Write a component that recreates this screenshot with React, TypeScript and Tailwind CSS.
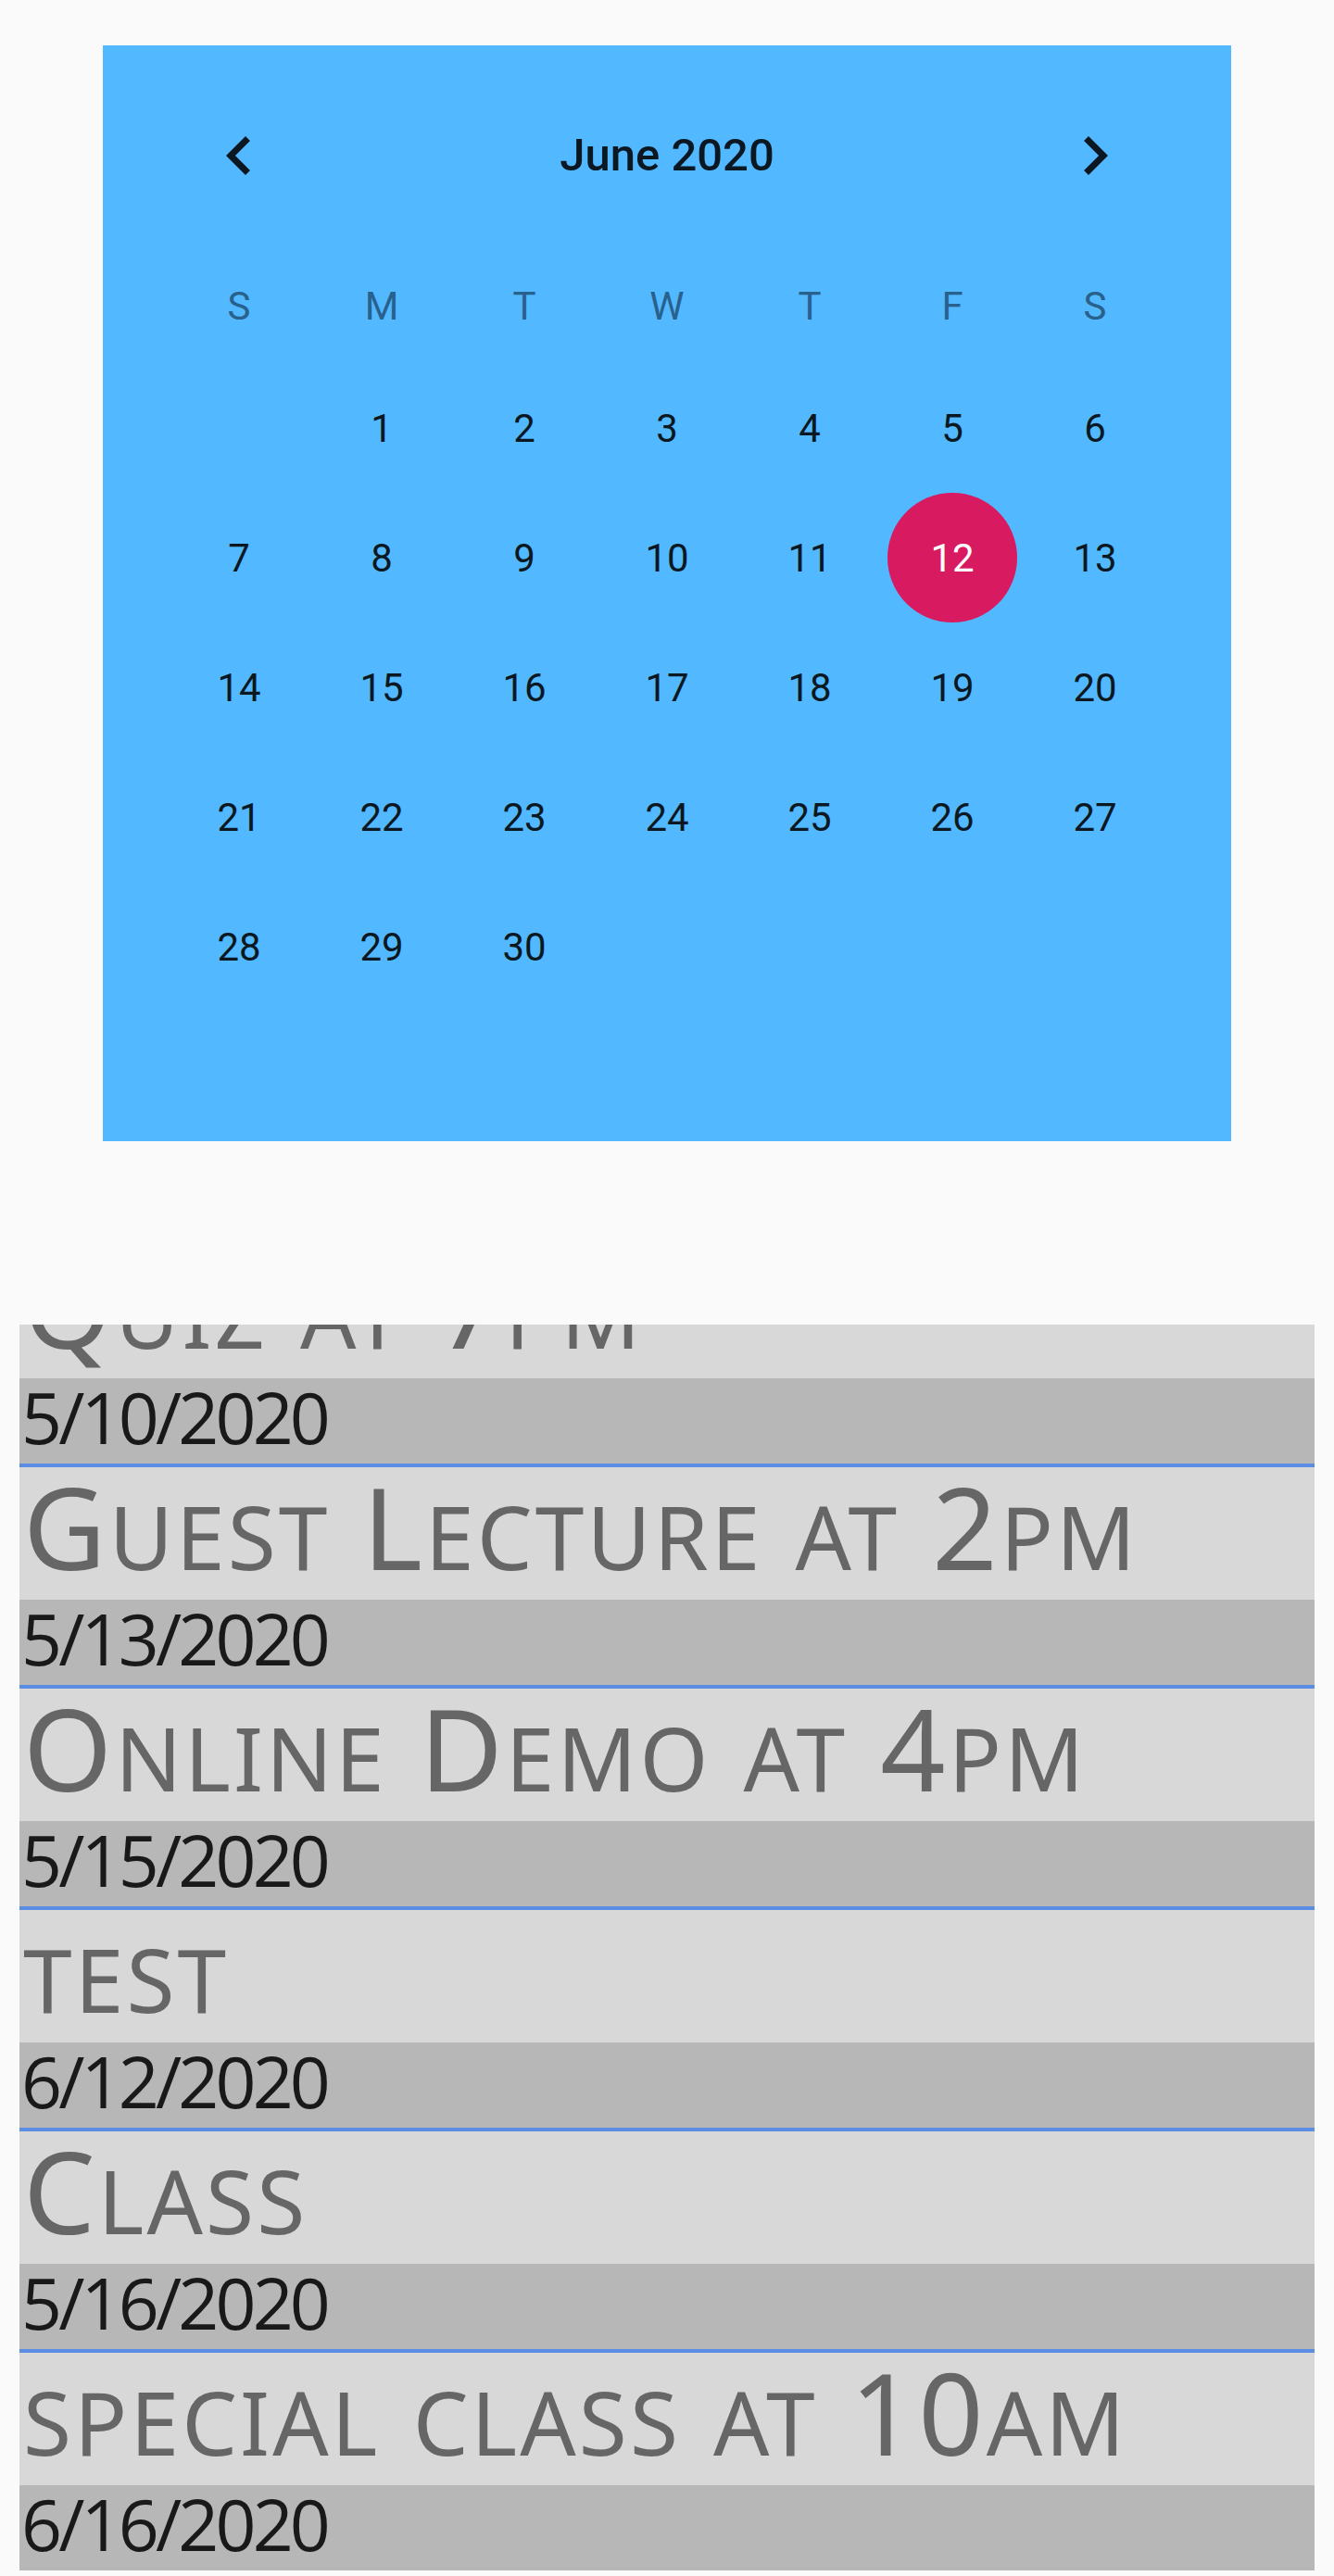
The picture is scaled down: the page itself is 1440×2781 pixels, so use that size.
import { ReactNode } from "react";

interface IEvent {
  title: string;
  date: string;
}

const events: IEvent[] = [
  { title: "Quiz at 7pm", date: "5/10/2020" },
  { title: "Guest Lecture at 2pm", date: "5/13/2020" },
  { title: "Online Demo at 4pm", date: "5/15/2020" },
  { title: "test", date: "6/12/2020" },
  { title: "Class", date: "5/16/2020" },
  { title: "special class at 10am", date: "6/16/2020" },
];

const weekDays = ["S", "M", "T", "W", "T", "F", "S"];

// june 2020 starts on a monday
const days: (number | null)[] = [null, ...Array.from({ length: 30 }, (_, i) => i + 1)];

const selectedDay = 12;

const Chevron = ({ dir }: { dir: "left" | "right" }): JSX.Element => (
  <svg width="84" height="84" viewBox="0 0 24 24" className="fill-[#0b1821]">
    {dir === "left" ? (
      <path d="M15.41 7.41L14 6l-6 6 6 6 1.41-1.41L10.83 12z" />
    ) : (
      <path d="M8.59 16.59L10 18l6-6-6-6-1.41 1.41L13.17 12z" />
    )}
  </svg>
);

const Cell = ({ children }: { children?: ReactNode }): JSX.Element => (
  <div className="h-[96px] flex items-center justify-center">{children}</div>
);

const Calendar = (): JSX.Element => {
  return (
    <div
      className="mx-auto w-[1218px] h-[1183px] bg-[#52b8ff] px-[70px] pt-[49px]"
      style={{ fontFamily: "Roboto, 'Noto Sans', sans-serif" }}
    >
      {/* Header ============================================ */}
      <div className="grid grid-cols-7 h-[140px] items-center">
        <div className="flex justify-center">
          <Chevron dir="left" />
        </div>
        <div className="col-span-5 text-center text-[49px] font-medium text-[#0b1821]">
          June 2020
        </div>
        <div className="flex justify-center">
          <Chevron dir="right" />
        </div>
      </div>

      <div className="grid grid-cols-7 h-[48px] mt-[61px] items-center">
        {weekDays.map((d, i) => (
          <div key={i} className="text-center text-[42px] text-[#28618c]">
            {d}
          </div>
        ))}
      </div>

      <div className="grid grid-cols-7 gap-y-[44px] mt-[67px]">
        {days.map((d, i) => (
          <Cell key={i}>
            {d === selectedDay ? (
              <div className="shrink-0 w-[140px] h-[140px] rounded-full bg-[#d81b60] flex items-center justify-center text-[42px] text-white">
                {d}
              </div>
            ) : (
              d && <span className="text-[42px] text-[#0b1821]">{d}</span>
            )}
          </Cell>
        ))}
      </div>
    </div>
  );
};

// small caps drawn by hand: lowercase runs get uppercased at a smaller size
const SmallCaps = ({ text }: { text: string }): JSX.Element => {
  const parts = text.match(/[a-z]+|[^a-z]+/g) ?? [];
  return (
    <>
      {parts.map((p, i) =>
        /[a-z]/.test(p) ? (
          <span key={i} className="uppercase text-[0.77em]">
            {p}
          </span>
        ) : (
          <span key={i}>{p}</span>
        )
      )}
    </>
  );
};

const EventItem = ({ event }: { event: IEvent }): JSX.Element => (
  <div className="border-b-4 border-[#5b8de2]">
    <div
      className="h-[143px] bg-[#d8d8d8] text-[#666666] text-[123px] leading-[127px] pl-[4px] whitespace-nowrap tracking-[0.025em]"
      style={{ fontFamily: "'Noto Sans', 'Open Sans', sans-serif" }}
    >
      <SmallCaps text={event.title} />
    </div>
    <div className="h-[92px] bg-[#b7b7b7] text-[#191919] text-[77px] leading-[84px] pl-[2px] tracking-[-0.05em]">
      {event.date}
    </div>
  </div>
);

export default function App(): JSX.Element {
  return (
    <div className="min-h-screen bg-[#fafafa] pt-[49px]">
      <Calendar />

      <div
        className="mx-auto mt-[198px] w-[1398px] h-[1345px] overflow-hidden"
        style={{ fontFamily: "'Open Sans', 'Noto Sans', sans-serif" }}
      >
        <div className="-mt-[85px]">
          {events.map((e) => (
            <EventItem key={e.date + e.title} event={e} />
          ))}
        </div>
      </div>
    </div>
  );
}
